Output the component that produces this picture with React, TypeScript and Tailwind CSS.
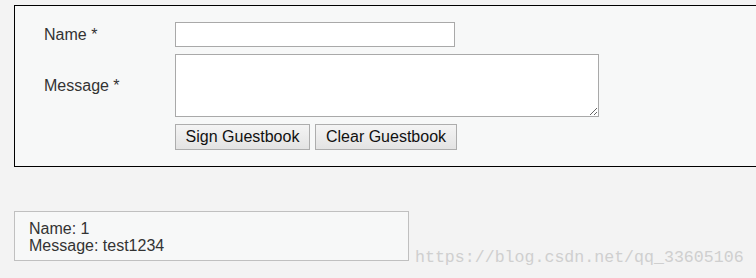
export default function App() {
  return (
    <div className="relative h-[278px] w-[756px] overflow-hidden bg-[#f3f3f3] pt-[5px] font-['Liberation_Sans',Arial,sans-serif] text-[16px] text-[#333]">
      <div className="ml-[14px] w-[760px] border border-black bg-[#f7f8f8] pb-[16px] pl-[29px] pt-[16px]">
        <div className="grid grid-cols-[131px_auto] items-center gap-y-[7px]">
          <label className="leading-[18px]">Name *</label>
          <input
            type="text"
            className="h-[25px] w-[280px] border border-[#a9a9a9] bg-white px-1 outline-none"
          />
          <label className="leading-[18px]">Message *</label>
          <textarea className="block h-[63px] w-[424px] resize border border-[#a9a9a9] bg-white outline-none" />
          <div />
          <div className="flex gap-[5px]">
            <button
              type="button"
              className="h-[26px] w-[135px] border border-[#adadad] bg-gradient-to-b from-[#f4f4f4] to-[#e3e3e3] text-[16px] leading-[24px] text-[#111]"
            >
              Sign Guestbook
            </button>
            <button
              type="button"
              className="h-[26px] w-[142px] border border-[#adadad] bg-gradient-to-b from-[#f4f4f4] to-[#e3e3e3] text-[16px] leading-[24px] text-[#111]"
            >
              Clear Guestbook
            </button>
          </div>
        </div>
      </div>

      <div className="ml-[14px] mt-[44px] h-[50px] w-[395px] border border-[#c0c0c0] bg-[#f7f8f8] pl-[14px] pt-[8px] leading-[17px]">
        <div>Name: 1</div>
        <div>Message: test1234</div>
      </div>

      <span className="absolute left-[415px] top-[248px] font-['Liberation_Mono',monospace] text-[16.6px] leading-[20px] text-[#cfcfcf]">
        https://blog.csdn.net/qq_33605106
      </span>
    </div>
  );
}
